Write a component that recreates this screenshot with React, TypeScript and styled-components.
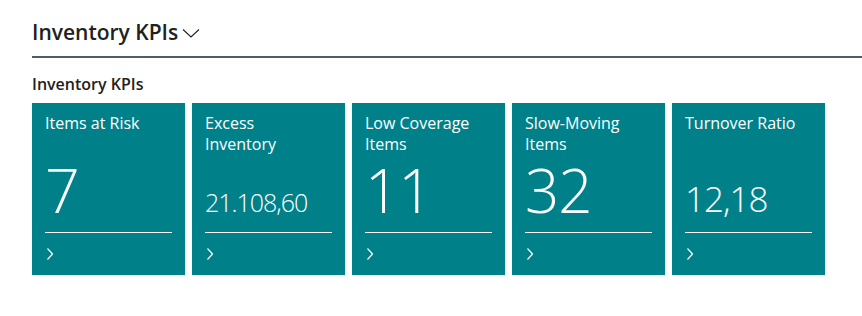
import React from "react";
import styled, { createGlobalStyle } from "styled-components";

const Global = createGlobalStyle`
  html, body { margin: 0; padding: 0; background: #ffffff; }
  body { font-family: "Open Sans", "Noto Sans", sans-serif; color: #212121; }
`;

const Page = styled.div`
  padding: 0 0 0 32px;
  width: 862px;
  box-sizing: border-box;
`;

const Header = styled.div`
  display: flex;
  align-items: center;
  height: 58px;
  border-bottom: 2px solid #505c6d;
  box-sizing: border-box;
  padding-top: 8px;
`;

const HeaderTitle = styled.h1`
  margin: 0;
  font-size: 21px;
  font-weight: 600;
  color: #212121;
`;

const Chevron = styled.svg`
  margin-left: 4px;
  margin-top: 2px;
`;

const SubTitle = styled.h2`
  margin: 16px 0 0;
  font-size: 16px;
  font-weight: 600;
  line-height: 20px;
  color: #212121;
`;

const Tiles = styled.div`
  display: flex;
  gap: 7px;
  margin-top: 9px;
`;

const Tile = styled.a`
  display: flex;
  flex-direction: column;
  width: 153px;
  height: 172px;
  box-sizing: border-box;
  padding: 10px 13px 0;
  background: #00818a;
  color: #ffffff;
  text-decoration: none;
`;

const TileTitle = styled.div`
  max-width: 116px;
  font-size: 16px;
  line-height: 21px;
  font-weight: 400;
`;

const TileValue = styled.div<{ $size: number }>`
  margin-top: auto;
  font-weight: 300;
  font-size: ${(p) => p.$size}px;
  line-height: ${(p) => Math.round(p.$size * 0.78)}px;
  letter-spacing: -1px;
  padding-bottom: ${(p) => Math.round(22 - p.$size * 0.07)}px;
`;

const TileLine = styled.div`
  height: 1px;
  background: #ffffff;
`;

const TileFooter = styled.div`
  height: 42px;
  display: flex;
  align-items: center;
  padding-left: 1px;
`;

type Kpi = { title: string; value: string; size: number };

const kpis: Kpi[] = [
  { title: "Items at Risk", value: "7", size: 61 },
  { title: "Excess Inventory", value: "21.108,60", size: 25 },
  { title: "Low Coverage Items", value: "11", size: 60 },
  { title: "Slow-Moving Items", value: "32", size: 60 },
  { title: "Turnover Ratio", value: "12,18", size: 35 },
];

export default function App() {
  return (
    <>
      <Global />
      <Page>
        <Header>
          <HeaderTitle>Inventory KPIs</HeaderTitle>
          <Chevron width="18" height="12" viewBox="0 0 18 12" fill="none">
            <path d="M1 2.5 L9 10 L17 2.5" stroke="#212121" strokeWidth="1.1" />
          </Chevron>
        </Header>
        <SubTitle>Inventory KPIs</SubTitle>
        <Tiles>
          {kpis.map((k) => (
            <Tile key={k.title} href="#">
              <TileTitle>{k.title}</TileTitle>
              <TileValue $size={k.size}>{k.value}</TileValue>
              <TileLine />
              <TileFooter>
                <svg width="8" height="14" viewBox="0 0 8 14" fill="none">
                  <path d="M1.5 1.5 L6.5 7 L1.5 12.5" stroke="#ffffff" strokeWidth="1.2" />
                </svg>
              </TileFooter>
            </Tile>
          ))}
        </Tiles>
      </Page>
    </>
  );
}
